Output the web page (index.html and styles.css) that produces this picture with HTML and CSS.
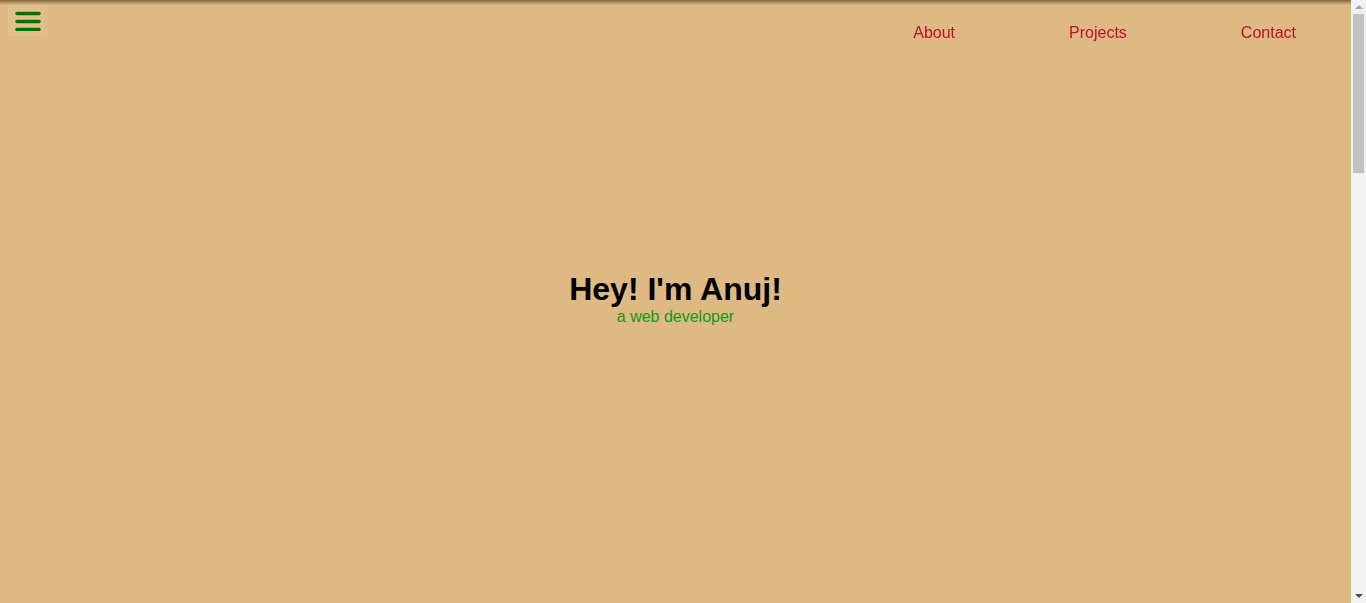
FILE: index.html
```html
<!DOCTYPE html>
<html lang="en">
<head>
<meta charset="utf-8">
<title>Anuj</title>
<link rel="stylesheet" href="styles.css">
</head>
<body>
<header class="topbar">
  <button class="menu-btn" aria-label="Menu">
    <svg width="26" height="20" viewBox="0 0 26 20">
      <g stroke="#007400" stroke-width="3.5" stroke-linecap="round">
        <line x1="2" y1="2.5" x2="24" y2="2.5"/>
        <line x1="2" y1="10.5" x2="24" y2="10.5"/>
        <line x1="2" y1="18.5" x2="24" y2="18.5"/>
      </g>
    </svg>
  </button>
  <nav class="nav">
    <a href="#about">About</a>
    <a href="#projects">Projects</a>
    <a href="#contact">Contact</a>
  </nav>
</header>
<main>
  <section class="hero">
    <h1 class="hero-title">Hey! I'm Anuj!</h1>
    <p class="hero-sub">a web developer</p>
  </section>
  <section id="about" class="section"></section>
  <section id="projects" class="section"></section>
  <section id="contact" class="section"></section>
</main>
<div class="scrollbar" aria-hidden="true">
  <div class="sb-btn"><span class="arrow-up"></span></div>
  <div class="sb-thumb"></div>
  <div class="sb-space"></div>
  <div class="sb-btn"><span class="arrow-down"></span></div>
</div>
</body>
</html>
```
FILE: styles.css
```css
html, body {
  margin: 0;
  padding: 0;
}
html {
  padding-right: 15px;
}
body {
  background: #deb983;
  font-family: "Liberation Sans", Arial, sans-serif;
}
.topbar {
  position: fixed;
  top: 0;
  left: 0;
  right: 15px;
  height: 64px;
  display: flex;
  align-items: flex-start;
  justify-content: space-between;
  background: linear-gradient(rgba(70, 50, 20, 0.6), rgba(70, 50, 20, 0) 5px);
  z-index: 10;
}
.menu-btn {
  margin: 5px 0 0 8px;
  width: 39px;
  height: 31px;
  padding: 0;
  border: none;
  background: #e2be8b;
  display: flex;
  align-items: center;
  justify-content: center;
  cursor: pointer;
}
.nav {
  display: flex;
  gap: 114px;
  padding: 24px 55px 0 0;
}
.nav a {
  color: #b9102c;
  text-decoration: none;
  font-size: 16px;
  line-height: 18px;
}
.hero {
  height: 597px;
  display: flex;
  flex-direction: column;
  align-items: center;
  justify-content: center;
}
.hero-title {
  margin: 0;
  font-size: 32px;
  line-height: 37px;
  font-weight: bold;
  color: #000;
}
.hero-sub {
  margin: 0;
  font-size: 16px;
  line-height: 18px;
  color: #129812;
}
.section {
  height: 530px;
}
.scrollbar {
  position: fixed;
  top: 0;
  right: 0;
  bottom: 0;
  width: 15px;
  background: #f1f1f1;
  display: flex;
  flex-direction: column;
  z-index: 20;
}
.sb-btn {
  height: 14px;
  display: flex;
  align-items: center;
  justify-content: center;
}
.arrow-up {
  width: 0;
  height: 0;
  border-left: 4px solid transparent;
  border-right: 4px solid transparent;
  border-bottom: 4px solid #a3a3a3;
}
.arrow-down {
  width: 0;
  height: 0;
  border-left: 4px solid transparent;
  border-right: 4px solid transparent;
  border-top: 4px solid #505050;
}
.sb-thumb {
  height: 159px;
  margin: 0 2px;
  background: #c1c1c1;
}
.sb-space {
  flex: 1;
}
```
